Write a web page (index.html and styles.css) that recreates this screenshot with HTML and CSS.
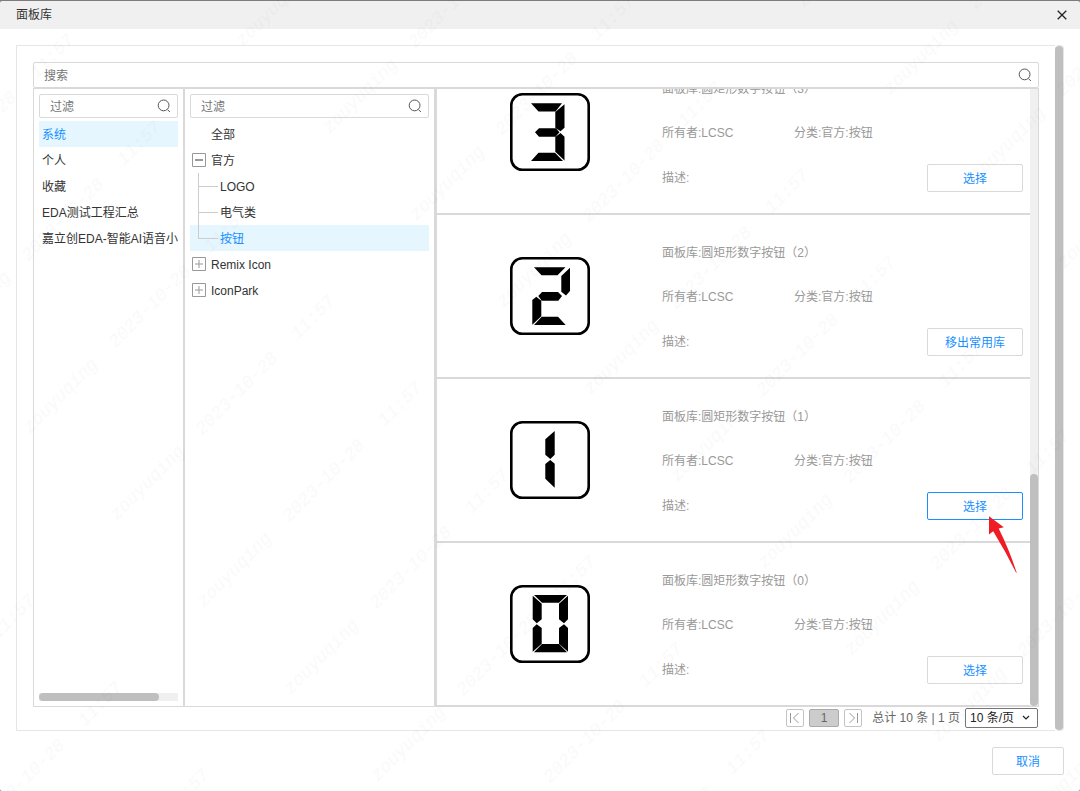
FILE: index.html
```html
<!DOCTYPE html>
<html lang="zh-CN">
<head>
<meta charset="utf-8">
<title>面板库</title>
<link rel="stylesheet" href="styles.css">
</head>
<body>
<svg class="defs" aria-hidden="true">
  <symbol id="search" viewBox="0 0 14 14"><circle cx="6.6" cy="6.4" r="5.4" fill="none" stroke="#555"/><path d="M10.5 10.6l2.4 2.4" stroke="#555" fill="none"/></symbol>
  <symbol id="plus" viewBox="0 0 14 14"><path d="M.5.5h13v13H.5z" fill="#fff" stroke="#999"/><path d="M3 7h8M7 3v8" stroke="#999" fill="none"/></symbol>
  <symbol id="minus" viewBox="0 0 14 14"><path d="M.5.5h13v13H.5z" fill="#fff" stroke="#999"/><path d="M3 7h8" stroke="#999" stroke-width="2" fill="none"/></symbol>
</svg>
<div class="dialog">
  <header class="titlebar">
    <h1>面板库</h1>
    <button class="close" aria-label="关闭"><svg width="10" height="10" viewBox="0 0 10 10"><path d="M.7.7l8.6 8.6M9.3.7L.7 9.3" stroke="#222" stroke-width="1.3"/></svg></button>
  </header>
  <main class="frame">
    <div class="content">
      <div class="field search"><input type="text" placeholder="搜索" aria-label="搜索"><svg width="14" height="14"><use href="#search"/></svg></div>
      <div class="panel">
        <section class="column sources">
          <div class="field filter"><input type="text" placeholder="过滤" aria-label="过滤来源"><svg width="14" height="14"><use href="#search"/></svg></div>
          <ul class="rows">
            <li class="row active">系统</li>
            <li class="row">个人</li>
            <li class="row">收藏</li>
            <li class="row">EDA测试工程汇总</li>
            <li class="row">嘉立创EDA-智能AI语音小</li>
          </ul>
          <div class="hscroll"><div class="thumb"></div></div>
        </section>
        <section class="column categories">
          <div class="field filter"><input type="text" placeholder="过滤" aria-label="过滤分类"><svg width="14" height="14"><use href="#search"/></svg></div>
          <ul class="rows tree">
            <li class="row root">全部</li>
            <li class="row"><svg width="14" height="14"><use href="#minus"/></svg>官方</li>
            <li class="row child">LOGO</li>
            <li class="row child">电气类</li>
            <li class="row child last active">按钮</li>
            <li class="row"><svg width="14" height="14"><use href="#plus"/></svg>Remix Icon</li>
            <li class="row"><svg width="14" height="14"><use href="#plus"/></svg>IconPark</li>
          </ul>
        </section>
        <section class="results">
          <div class="items">
            <article class="item">
              <svg class="preview" width="80" height="78" viewBox="0 0 80 78"><rect x="1.3" y="1.3" width="77.4" height="75.4" rx="11"/><path d="M21 10.3H52L45.5 18.5H28.5zM54.5 11.3V34.7L50.5 38.3L45.3 34.7V19zM25 39.3L29 35.2H46L49.5 39.3L45.5 43.7H29zM50.5 40L54.5 43.7V67.5L45.3 58.7V44zM21 68L28.5 59.7H45L53 68z"/></svg>
              <div class="info"><p class="name">面板库:圆矩形数字按钮（3）</p><p>所有者:LCSC</p><p class="cat">分类:官方:按钮</p><p>描述:</p><div class="action"><button class="btn">选择</button></div></div>
            </article>
            <article class="item">
              <svg class="preview" width="80" height="78" viewBox="0 0 80 78"><rect x="1.3" y="1.3" width="77.4" height="75.4" rx="11"/><path d="M24 10.3H55.5L47.5 18.3H31.5zM60 10.7V34L56 38.5L51.3 34.7V19zM28.3 39L32 35H48L52 39L48.3 43.7H31.7zM22.3 67.7V43L26.3 39.7L31.3 43.7V59.2zM24 68L31.7 59.7H48L55.7 68z"/></svg>
              <div class="info"><p class="name">面板库:圆矩形数字按钮（2）</p><p>所有者:LCSC</p><p class="cat">分类:官方:按钮</p><p>描述:</p><div class="action"><button class="btn">移出常用库</button></div></div>
            </article>
            <article class="item">
              <svg class="preview" width="80" height="78" viewBox="0 0 80 78"><rect x="1.3" y="1.3" width="77.4" height="75.4" rx="11"/><path d="M44.7 10V33.7L40.3 38L35.3 33.7V18.3zM40.3 39L44.7 42.7V66.7L35.3 57.7V43z"/></svg>
              <div class="info"><p class="name">面板库:圆矩形数字按钮（1）</p><p>所有者:LCSC</p><p class="cat">分类:官方:按钮</p><p>描述:</p><div class="action"><button class="btn focused">选择</button><svg class="pointer" width="28" height="58" viewBox="0 0 28 58" aria-hidden="true"><path d="M0 .3L14.8 11.2L9.7 12.5Q20 33 27.8 57L27 56.6Q17 36 4.2 15.2L0 18.5z" fill="#ee1c24"/></svg></div></div>
            </article>
            <article class="item">
              <svg class="preview" width="80" height="78" viewBox="0 0 80 78"><rect x="1.3" y="1.3" width="77.4" height="75.4" rx="11"/><path d="M24 10H57L49 17.7H32zM22.7 10.7L31.7 18.7V34.3L26.7 38.3L22.7 34.3zM58 10.7L49 18.7V34.3L54 38.3L58 34.3zM22.7 66.7L31.7 58.7V43L26.7 39.3L22.7 43zM58 66.7L49 58.7V43L54 39.3L58 43zM24 67.3L32 59H49L57 67.3z"/></svg>
              <div class="info"><p class="name">面板库:圆矩形数字按钮（0）</p><p>所有者:LCSC</p><p class="cat">分类:官方:按钮</p><p>描述:</p><div class="action"><button class="btn">选择</button></div></div>
            </article>
          </div>
          <div class="vscroll"><div class="thumb"></div></div>
        </section>
      </div>
      <nav class="pager" aria-label="分页">
        <button class="page" aria-label="首页"><svg width="12" height="12" viewBox="0 0 12 12"><path d="M1.5 1v10M9.5 1l-5 5 5 5" fill="none" stroke="#999"/></svg></button>
        <button class="page current">1</button>
        <button class="page" aria-label="末页"><svg width="12" height="12" viewBox="0 0 12 12"><path d="M10.5 1v10M2.5 1l5 5-5 5" fill="none" stroke="#999"/></svg></button>
        <span class="total">总计 10 条 | 1 页</span>
        <span class="size"><select aria-label="每页条数"><option>10 条/页</option></select><svg width="8" height="6" viewBox="0 0 8 6"><path d="M1 1l3 3 3-3" fill="none" stroke="#222" stroke-width="1.2"/></svg></span>
      </nav>
    </div>
    <div class="outer-scroll"></div>
  </main>
  <footer class="footer"><button class="btn cancel">取消</button></footer>
</div>
<svg class="watermark" aria-hidden="true">
  <defs>
    <pattern id="mark" x="100" y="0" width="424" height="123" patternUnits="userSpaceOnUse" patternTransform="rotate(-45)">
      <text x="87" y="82">zouyuqing</text>
      <text x="213" y="82">2023-10-28</text>
      <text x="321" y="82">11:57</text>
    </pattern>
  </defs>
  <rect width="100%" height="100%" fill="url(#mark)"/>
</svg>
</body>
</html>
```
FILE: styles.css
```css
* { box-sizing: border-box; }
body { margin: 0; background: #7f7c7f; color: #333; font: 12px/18px "Liberation Sans", "Noto Sans CJK SC", sans-serif; }
h1, p, ul { margin: 0; padding: 0; font-size: 12px; font-weight: 400; }
ul { list-style: none; }
button, input, select { font: inherit; color: inherit; margin: 0; }
svg { display: block; flex: none; }
.defs { display: none; }

.dialog { display: flex; flex-direction: column; height: 100vh; border-top: 1px solid #7f7c7f; }
.titlebar { display: flex; align-items: center; justify-content: space-between; height: 28px; padding: 0 13px 0 16px; background: #f0f0f0; border-radius: 2px 2px 0 0; }
.close { padding: 0; border: 0; background: none; }
.frame { flex: 1; min-height: 0; display: flex; padding: 16px 16px 0; background: #fff; }
.content { flex: 1; min-width: 0; display: flex; flex-direction: column; padding: 16px 16px 0; border: 1px solid #e6e6e6; border-right: 0; }
.outer-scroll { width: 9px; border: 1px solid #e6e6e6; border-left: 0; background: linear-gradient(#bfbfbf, #bfbfbf) padding-box; border-radius: 4px; }
.footer { display: flex; justify-content: flex-end; padding: 16px; background: #fff; border-radius: 0 0 2px 2px; }

.field { display: flex; align-items: center; border: 1px solid #d9d9d9; border-radius: 2px; background: #fff; color: #666; }
.field input { flex: 1; min-width: 0; height: 22px; padding: 2px 0 0 10px; border: 0; outline: 0; background: none; }
.field input::placeholder { color: #757575; }
.search { height: 26px; padding-right: 6px; }
.filter { height: 24px; padding-right: 6px; }

.panel { flex: 1; min-height: 0; display: flex; border: 1px solid #d9d9d9; }
.column { display: flex; flex-direction: column; gap: 3px; min-width: 0; padding: 5px; border-right: 2px solid #d9d9d9; }
.sources { flex: 0 0 151px; }
.categories { flex: 0 0 251px; }
.rows { flex: 1; min-height: 0; overflow: hidden; }
.row { display: flex; align-items: center; gap: 5px; height: 26px; padding: 2px 0 0 3px; white-space: nowrap; }
.row.active { background: #e5f6ff; color: #1890ff; }
.row svg { margin-bottom: 2px; }
.tree .row { padding-left: 2px; }
.tree .root { padding-left: 21px; }
.tree .child { position: relative; padding-left: 30px; }
.child::before { content: ""; position: absolute; left: 8px; top: 0; width: 19px; height: 13px; border-left: 1px solid #ccc; border-bottom: 1px solid #ccc; }
.child:not(.last)::after { content: ""; position: absolute; left: 8px; top: 13px; height: 13px; border-left: 1px solid #ccc; }
.hscroll { height: 8px; background: #f0f0f0; }
.thumb { background: #bfbfbf; border-radius: 4px; }
.hscroll .thumb { width: 86%; height: 100%; }
.vscroll { display: flex; flex-direction: column; justify-content: flex-end; width: 8px; background: #f0f0f0; }
.vscroll .thumb { height: 232px; }

.results { flex: 1; min-width: 0; display: flex; }
.items { flex: 1; min-width: 0; display: flex; flex-direction: column; justify-content: flex-end; overflow: hidden; }
.item { flex: none; display: flex; align-items: center; height: 164px; padding-right: 7px; border: 1px solid #d9d9d9; border-right: 0; color: #999; }
.preview { margin: 0 72px 0 73px; }
.preview rect { fill: none; stroke: #000; stroke-width: 2.6px; }
.info { flex: 1; display: grid; grid-template-columns: 132px 1fr; grid-template-rows: 44px 44px 46px; align-items: center; padding-top: 4px; }
.name { grid-column: 1 / 3; }
.action { position: relative; justify-self: end; }
.pointer { position: absolute; left: 62px; top: 24px; }
.btn { display: block; width: 96px; height: 28px; padding: 2px 0 0; border: 1px solid #d9d9d9; border-radius: 2px; background: #fff; color: #1890ff; }
.btn.focused { border-color: #1890ff; }
.btn.cancel { width: 72px; }

.pager { display: flex; align-items: center; justify-content: flex-end; gap: 5px; height: 23px; padding: 0 1px 1px 0; color: #666; }
.page { display: flex; align-items: center; justify-content: center; width: 18px; height: 18px; padding: 0; border: 1px solid #c4c4c4; border-radius: 2px; background: #fff; }
.page.current { width: 30px; background: #ccc; border-color: #aaa; }
.total { margin-left: 5px; }
.size { display: flex; align-items: center; width: 73px; height: 20px; border: 1px solid #767676; border-radius: 2px; padding-right: 7px; color: #222; }
.size select { flex: 1; min-width: 0; appearance: none; border: 0; padding: 0 0 0 4px; background: none; }

.watermark { position: absolute; inset: 0; width: 100%; height: 100%; pointer-events: none; }
.watermark text { font: italic 18px "Liberation Mono", monospace; text-anchor: middle; fill: #000; fill-opacity: 0.025; }
```
